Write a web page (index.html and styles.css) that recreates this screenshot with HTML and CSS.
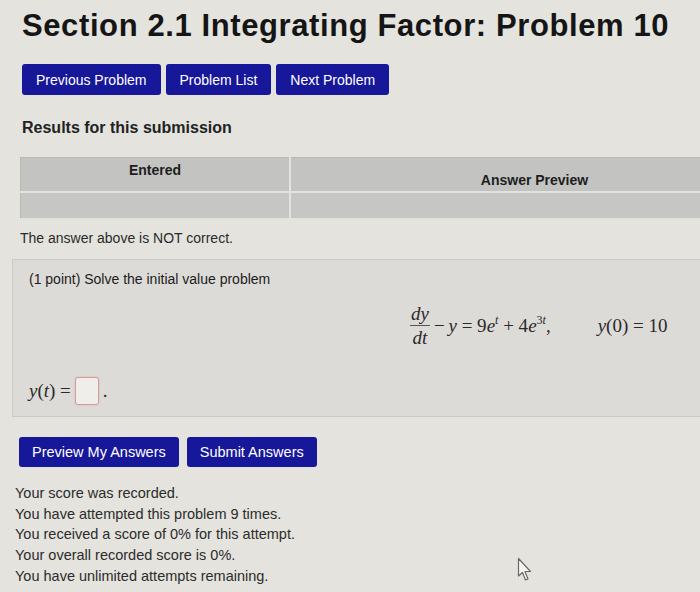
FILE: index.html
```html
<!DOCTYPE html>
<html>
<head>
<meta charset="utf-8">
<link rel="stylesheet" href="styles.css">
</head>
<body>
<div class="page">
  <h1 class="title">Section 2.1 Integrating Factor: Problem 10</h1>
  <div class="nav">
    <span class="btn">Previous Problem</span>
    <span class="btn">Problem List</span>
    <span class="btn">Next Problem</span>
  </div>
  <h2 class="results">Results for this submission</h2>
  <table class="attempt">
    <tr><th class="c1">Entered</th><th class="c2">Answer Preview</th></tr>
    <tr><td class="c1"></td><td class="c2"></td></tr>
  </table>
  <p class="notcorrect">The answer above is NOT correct.</p>
  <div class="problem">
    <p class="prompt">(1 point) Solve the initial value problem</p>
    <div class="display">
      <span class="frac"><span class="num">dy</span><span class="den">dt</span></span>
      <span class="m">&minus;&thinsp;<i>y</i> = 9<i>e</i><sup><i>t</i></sup> + 4<i>e</i><sup>3<i>t</i></sup>,</span>
      <span class="m cond"><i>y</i>(0) = 10</span>
    </div>
    <div class="answer">
      <span class="m"><i>y</i>(<i>t</i>)&nbsp;=</span>
      <span class="inbox"></span>
      <span class="m">.</span>
    </div>
  </div>
  <div class="submit">
    <span class="btn big">Preview My Answers</span>
    <span class="btn big">Submit Answers</span>
  </div>
  <div class="score">
    <div>Your score was recorded.</div>
    <div>You have attempted this problem 9 times.</div>
    <div>You received a score of 0% for this attempt.</div>
    <div>Your overall recorded score is 0%.</div>
    <div>You have unlimited attempts remaining.</div>
  </div>
  <svg class="cursor" width="16" height="26" viewBox="0 0 16 26">
    <path d="M1.5 1.5 L1.5 19 L5.5 15.5 L8.5 23 L11 22 L8 14.5 L13.5 14.5 Z" fill="#f4f4f0" stroke="#6a6a6a" stroke-width="1.2" stroke-linejoin="round"/>
  </svg>
</div>
</body>
</html>
```
FILE: styles.css
```css
html, body {
  margin: 0;
  padding: 0;
  background: #e4e3de;
  overflow: hidden;
}
.page {
  position: relative;
  width: 700px;
  height: 592px;
  font-family: "Liberation Sans", Arial, sans-serif;
  color: #1c1c1c;
}
.title {
  margin: 0;
  padding: 8px 0 0 22px;
  font-size: 31px;
  line-height: 36px;
  font-weight: bold;
  letter-spacing: 0.6px;
  white-space: nowrap;
  color: #151515;
}
.nav {
  display: flex;
  gap: 5px;
  margin: 20px 0 0 22px;
}
.btn {
  display: inline-flex;
  align-items: center;
  justify-content: center;
  background: #17179a;
  color: #fff;
  font-size: 14px;
  height: 31px;
  padding: 0 14px;
  border-radius: 3px;
  white-space: nowrap;
}
.results {
  margin: 24px 0 0 22px;
  font-size: 16px;
  line-height: 18px;
  font-weight: bold;
  color: #222;
}
.attempt {
  margin: 20px 0 0 20px;
  width: 760px;
  border-collapse: collapse;
  background: #c6c6c4;
  border: 1px solid #b8b8b6;
}
.attempt th, .attempt td {
  border: 2px solid #e2e2e0;
  border-top: none;
  padding: 0;
}
.attempt th {
  height: 29px;
  font-size: 14px;
  font-weight: bold;
  color: #1e1e1e;
  background: #c3c3c1;
}
.attempt td { height: 25px; }
.attempt .c1 { width: 268px; border-left: none; }
.attempt th.c1 { vertical-align: top; padding-top: 4px; }
.attempt th.c2 { vertical-align: bottom; padding-bottom: 3px; }
.notcorrect {
  margin: 10px 0 0 20px;
  font-size: 14px;
  line-height: 16px;
  color: #2a2a2a;
}
.problem {
  margin: 13px 0 0 12px;
  width: 720px;
  height: 158px;
  box-sizing: border-box;
  background: #dcdbd7;
  border: 1px solid #cacac6;
  padding: 10px 0 0 16px;
}
.prompt {
  margin: 0;
  font-size: 14px;
  line-height: 18px;
  color: #1c1c1c;
}
.display {
  display: flex;
  align-items: center;
  margin: 16px 0 0 381px;
  font-family: "Liberation Serif", "Times New Roman", serif;
  font-size: 19px;
  color: #2a2a2a;
}
.m {
  font-family: "Liberation Serif", "Times New Roman", serif;
  font-size: 19px;
  white-space: nowrap;
}
.m sup { font-size: 12px; vertical-align: 8px; line-height: 0; }
.frac {
  display: inline-flex;
  flex-direction: column;
  align-items: center;
  font-style: italic;
  margin-right: 4px;
}
.num { padding: 0 1px 2px; border-bottom: 1px solid #555; line-height: 19px; }
.den { padding-top: 2px; line-height: 19px; }
.cond { margin-left: 47px; }
.answer {
  display: flex;
  align-items: center;
  gap: 4px;
  margin: 30px 0 0 0;
}
.answer .m { color: #2a2a2a; }
.inbox {
  width: 22px;
  height: 26px;
  background: #efeeea;
  border: 1px solid #d39a9a;
  border-radius: 3px;
  box-shadow: 0 0 2px #e4b0b0;
}
.submit {
  display: flex;
  gap: 8px;
  margin: 20px 0 0 19px;
}
.btn.big {
  font-size: 14.5px;
  height: 30px;
  padding: 0 13px;
}
.score {
  margin: 16px 0 0 15px;
  font-size: 14.5px;
  line-height: 20.7px;
  color: #2c2c2c;
}
.cursor {
  position: absolute;
  left: 517px;
  top: 557px;
}
```
